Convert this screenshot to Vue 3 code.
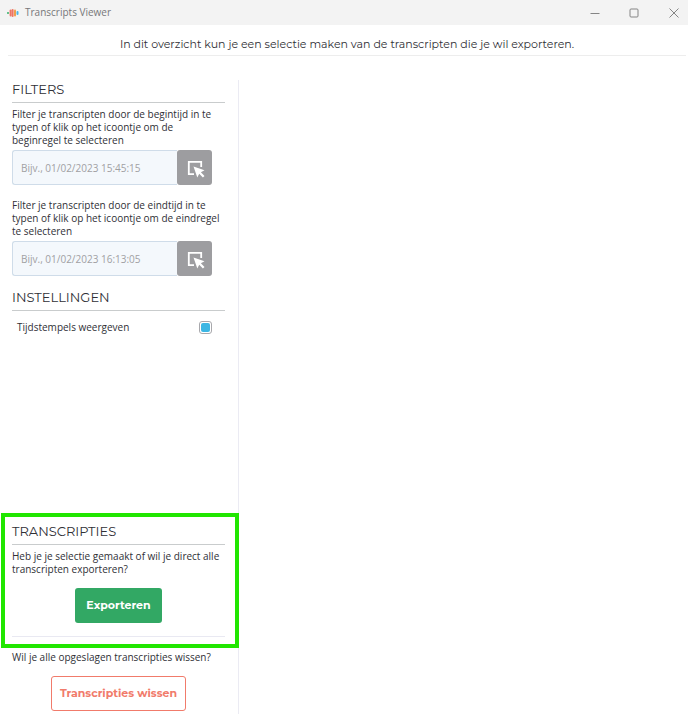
<script setup>
import { ref } from 'vue'

const filters = ref([
  {
    id: 'start',
    label: 'Filter je transcripten door de begintijd in te typen of klik op het icoontje om de beginregel te selecteren',
    placeholder: 'Bijv., 01/02/2023 15:45:15',
    pick: 'Beginregel selecteren',
    value: '',
  },
  {
    id: 'end',
    label: 'Filter je transcripten door de eindtijd in te typen of klik op het icoontje om de eindregel te selecteren',
    placeholder: 'Bijv., 01/02/2023 16:13:05',
    pick: 'Eindregel selecteren',
    value: '',
  },
])
const showTimestamps = ref(true)
</script>

<template>
  <div class="window">
    <header class="titlebar">
      <svg class="logo" width="12" height="10" viewBox="0 0 12 10" aria-hidden="true">
        <rect x="0" y="4" width="2" height="2" rx="1" fill="#35b06a" />
        <rect x="2.6" y="1.5" width="2" height="7" rx="1" fill="#ee7564" />
        <rect x="4.6" y="1" width="2" height="8" rx="1" fill="#ee7564" />
        <rect x="7" y="1.5" width="2" height="7" rx="1" fill="#f0a04c" />
        <rect x="9.5" y="3" width="2" height="4" rx="1" fill="#49b7e6" />
      </svg>
      <span class="title">Transcripts Viewer</span>
      <div class="controls">
        <button type="button" aria-label="Minimaliseren">
          <svg width="10" height="10" viewBox="0 0 10 10"><path d="M0.5 5.5h9" /></svg>
        </button>
        <button type="button" aria-label="Maximaliseren">
          <svg width="10" height="10" viewBox="0 0 10 10"><rect x="1" y="1" width="8" height="8" rx="1" /></svg>
        </button>
        <button type="button" aria-label="Sluiten">
          <svg width="10" height="10" viewBox="0 0 10 10"><path d="M0.5 0.5l9 9M9.5 0.5l-9 9" /></svg>
        </button>
      </div>
    </header>

    <p class="intro">In dit overzicht kun je een selectie maken van de transcripten die je wil exporteren.</p>

    <div class="body">
      <aside class="sidebar">
        <section class="panel">
          <h2>FILTERS</h2>
          <div v-for="f in filters" :key="f.id" class="filter">
            <label :for="f.id">{{ f.label }}</label>
            <div class="field">
              <input :id="f.id" v-model="f.value" type="text" :placeholder="f.placeholder" />
              <button type="button" :aria-label="f.pick">
                <svg width="18" height="18" viewBox="0 0 18 18" aria-hidden="true">
                  <path d="M7 14.2H1.8V1.8h12.4V7" fill="none" stroke="#fff" stroke-width="1.8" />
                  <path d="M6.5 6.5L17.5 10.3L13.9 12.2L17.5 15.9L15.9 17.5L12.2 13.8L10.3 17.5Z" fill="#fff" />
                </svg>
              </button>
            </div>
          </div>
        </section>

        <section class="panel">
          <h2>INSTELLINGEN</h2>
          <div class="setting">
            <label for="timestamps">Tijdstempels weergeven</label>
            <input id="timestamps" v-model="showTimestamps" type="checkbox" />
          </div>
        </section>

        <section class="panel highlight">
          <h2>TRANSCRIPTIES</h2>
          <p class="export-text">Heb je je selectie gemaakt of wil je direct alle transcripten exporteren?</p>
          <button type="button" class="action export">Exporteren</button>
          <hr />
        </section>

        <section class="panel clear">
          <p>Wil je alle opgeslagen transcripties wissen?</p>
          <button type="button" class="action wipe">Transcripties wissen</button>
        </section>
      </aside>
      <main class="content"></main>
    </div>
  </div>
</template>

<style>
body {
  margin: 0;
  background: #fff;
}
</style>

<style scoped>
* {
  box-sizing: border-box;
}
.window {
  display: flex;
  flex-direction: column;
  min-height: 100vh;
  font: 10px/13px "Open Sans", "Noto Sans", sans-serif;
  color: #303036;
}
p, h2 {
  margin: 0;
}
button {
  font-family: inherit;
  cursor: pointer;
}
.titlebar {
  display: flex;
  align-items: center;
  height: 25px;
  padding-left: 7px;
  background: #f3f3f3;
}
.logo {
  margin-right: 6px;
}
.title {
  font-size: 10px;
  color: #77777a;
}
.controls {
  display: flex;
  margin-left: auto;
}
.controls button {
  display: grid;
  place-items: center;
  width: 39px;
  height: 24px;
  padding: 0;
  border: 0;
  background: none;
}
.controls button:last-child {
  width: 28px;
  margin-left: 7px;
}
.controls svg {
  fill: none;
  stroke: #858585;
}
.intro {
  margin: 0 2px 24px 8px;
  padding: 11px 0 2px;
  border-bottom: 1px solid #ededed;
  font: 11px/17px Montserrat, Inter, sans-serif;
  text-align: center;
  color: #303036;
}
.body {
  display: flex;
  flex: 1;
}
.sidebar {
  display: flex;
  flex-direction: column;
  width: 239px;
  border-right: 1px solid #ebebf3;
}
.content {
  flex: 1;
}
.panel {
  padding: 0 13px 0 12px;
}
h2 {
  padding-bottom: 4px;
  border-bottom: 1px solid #c9cccd;
  font: 400 13px/18px Montserrat, Inter, sans-serif;
  color: #303036;
}
.filter {
  padding-top: 5px;
  margin-bottom: 9px;
}
.filter label {
  display: block;
  max-width: 210px;
}
.field {
  display: flex;
  width: 200px;
  margin-top: 3px;
}
.field input {
  flex: 1;
  min-width: 0;
  height: 35px;
  padding: 0 8px;
  border: 1px solid #cfdce9;
  border-right: 0;
  border-radius: 3px 0 0 3px;
  background: #f4f8fc;
  font: inherit;
  color: #303036;
}
.field input::placeholder {
  color: #a0a0a3;
  opacity: 1;
}
.field button {
  display: grid;
  place-items: center;
  width: 35px;
  height: 35px;
  padding: 2px 0 0 2px;
  border: 0;
  border-radius: 3px;
  background: #9d9da0;
}
.filter + .filter {
  margin-bottom: 12px;
}
.setting {
  display: flex;
  align-items: center;
  justify-content: space-between;
  padding: 10px 13px 0 5px;
}
.setting input {
  appearance: none;
  display: grid;
  place-items: center;
  width: 13px;
  height: 13px;
  margin: 0;
  border: 1px solid #a8a8ac;
  border-radius: 3px;
  background: #fff;
}
.setting input:checked::before {
  content: "";
  width: 9px;
  height: 9px;
  border-radius: 2px;
  background: #3cb6e3;
}
.highlight {
  display: flex;
  flex-direction: column;
  margin: auto -1px 0 1px;
  padding: 5px 10px 7px 7px;
  border: 4px solid #21e600;
}
.export-text {
  padding-top: 5px;
}
.action {
  align-self: center;
  height: 35px;
  border-radius: 3px;
  font: 700 11px/17px Montserrat, Inter, sans-serif;
}
.export {
  margin-top: 12px;
  padding: 0 11px;
  border: 0;
  background: #32a864;
  color: #fff;
}
hr {
  width: 100%;
  margin: 13px 0 0;
  border: 0;
  border-top: 1px solid #e9e9f2;
}
.clear {
  display: flex;
  flex-direction: column;
  gap: 12px;
  padding-top: 3px;
  padding-bottom: 3px;
}
.wipe {
  padding: 0 8px;
  border: 1px solid #f17b6b;
  background: #fff;
  color: #f17b6b;
}
</style>
